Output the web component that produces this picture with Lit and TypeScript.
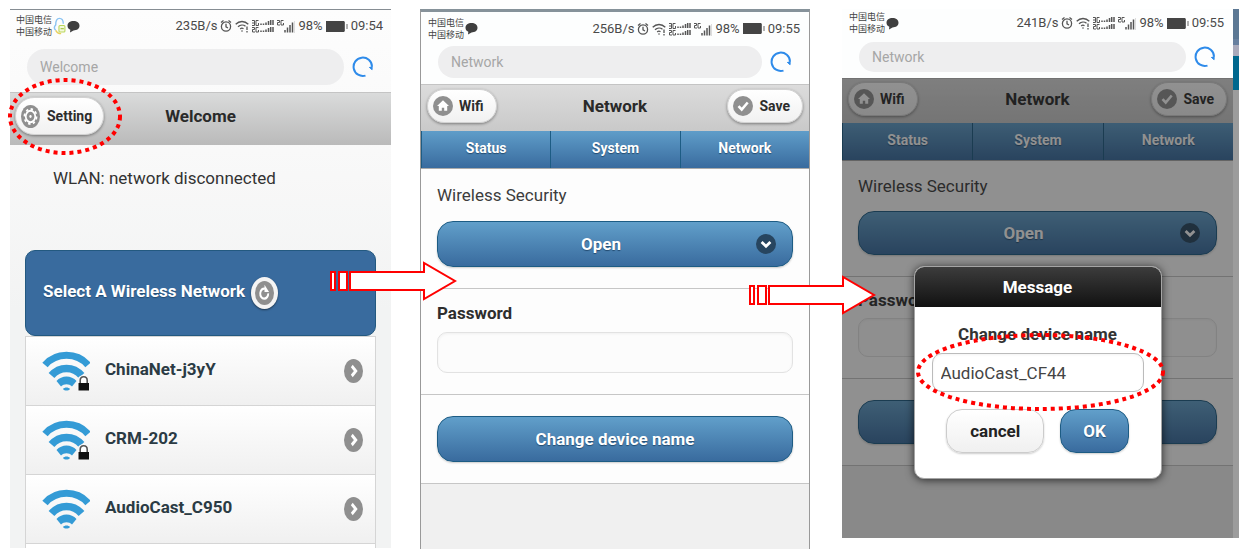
import { LitElement, html, svg, css } from "lit";
import { customElement, property } from "lit/decorators.js";

@customElement("status-bar")
class StatusBar extends LitElement {
  @property() speed = "";
  @property() time = "";
  @property({ type: Boolean }) buddy = false;

  static styles = css`
    :host { display: flex; align-items: center; justify-content: space-between; color: #4a4a4a; font-size: 13px; line-height: 16px; }
    .left, .right { display: flex; align-items: center; gap: 3px; white-space: nowrap; }
    .left { gap: 1px; }
    .carriers { font: 9px/12px "Noto Sans CJK SC", sans-serif; color: #444; }
    svg { display: block; flex: none; }
  `;

  render() {
    return html`
      <div class="left">
        <div class="carriers"><div>中国电信</div><div>中国移动</div></div>
        ${this.buddy ? html`<svg width="13" height="18" viewBox="0 0 12 16" fill="none">
          <path d="M2.500 12C.5 10 1.500 8 2.500 7c0-4 1-6 3.500-6s3.500 2 3.500 5" stroke="#8cc4f2" stroke-width="1.300"/>
          <path d="M2.500 12c1 2 3 3 5 3" stroke="#e9cf5a" stroke-width="1.300"/>
          <rect x="5.500" y="7.500" width="5.500" height="6" rx="1" stroke="#b9d65a" fill="#f3f9dc"/><path d="M7 10.500h3" stroke="#9bbf3a"/>
        </svg>` : ""}
        <svg width="13" height="13" viewBox="0 0 13 13"><path d="M6.500 1C10 1 12.500 3 12.500 5.800S10 10.500 6.500 10.500L3 12.500l.3-2.700C1.500 9 .5 7.600.5 5.800.5 3 3 1 6.500 1z" fill="#3f3f3f"/></svg>
      </div>
      <div class="right">
        <span>${this.speed}</span>
        <svg width="12" height="14" viewBox="0 0 12 14" fill="none" stroke="#555" stroke-width="1.300">
          <circle cx="6" cy="7.500" r="4.600"/><path d="M6 4.800v3l2 1.200M1 3.500 3.500 1.500M11 3.500 8.500 1.500"/>
        </svg>
        <svg width="14" height="14" viewBox="0 0 14 14" fill="none" stroke="#555" stroke-width="1.300">
          <path d="M.7 5.200C4.300 1.600 9.700 1.600 13.300 5.200M3 7.800c2.300-2.200 5.500-2.200 7.500-.5M5.200 10c1-1 2.300-1 3.300-.2"/><circle cx="7" cy="12" r=".8" fill="#555" stroke="none"/><path d="M12 7.500v3.500M12 12v1.500"/>
        </svg>
        <svg width="22" height="14" viewBox="0 0 22 14" fill="none" stroke="#555">
          <path d="M0 1.500h2.500v5H0M0 4h2.500M6.500 1.500H4v5h2.500V4M0 8.500h2.500v2H.5v2.500H3M6.500 8.500H4V13h2.500v-2"/>
          <path d="M9 4.500V6M11.500 4.500V6M14 3.500V6M16.500 2v4M18.700 1v5M21 1v5M9 11.500V13M11.500 11.500V13M14 10.500V13M16.500 9v4M18.700 8v5M21 8v5" stroke-width="1.500"/>
        </svg>
        <svg width="18" height="14" viewBox="0 0 18 14" fill="none" stroke="#555">
          <path d="M0 1.500h2.500v2H.5V6H3M6.500 1.500H4V6h2.500V4"/>
          <path d="M8 11v2.500M10.500 8.500v5M13 6v7.500M15.500 3.500v10" stroke-width="1.500"/><path d="M17.700 2v12" stroke="#bbb" stroke-width=".6"/>
        </svg>
        <span>98%</span>
        <svg width="22" height="11" viewBox="0 0 22 11"><rect width="18" height="11" fill="#444"/><path d="M18.500.5v10M21 3v5" stroke="#666"/></svg>
        <span>${this.time}</span>
      </div>`;
  }
}

@customElement("address-bar")
class AddressBar extends LitElement {
  @property() page = "";

  static styles = css`
    :host { display: flex; align-items: center; gap: 8px; }
    .address { flex: 1; min-width: 0; box-sizing: border-box; height: 100%; border: 0; border-radius: 18px; background: #eeeeef; padding: 0 13px; color: #a6a6a6; font: 14px/20px Roboto, sans-serif; outline: 0; }
    .reload { flex: none; border: 0; background: none; padding: 0; width: 22px; height: 24px; }
    svg { display: block; }
  `;

  render() {
    return html`
      <input class="address" aria-label="Address" .value=${this.page} />
      <button class="reload" aria-label="Reload">
        <svg width="22" height="24" viewBox="0 0 22 24" fill="none" stroke="#2e8bea" stroke-width="2"><path d="M13.500 20.600A9.200 9.200 0 1 1 20 11.500"/><path d="m17.200 12.200 2.900 2.500V11" fill="#2e8bea" stroke-width="1"/></svg>
      </button>`;
  }
}

const glyphs: Record<string, unknown> = {
  gear: svg`<circle cx="10" cy="10" r="5" fill="none" stroke="#fff" stroke-width="1.800"/><circle cx="10" cy="10" r="6.500" fill="none" stroke="#fff" stroke-width="1.600" stroke-dasharray="2.500 2.600"/><circle cx="10" cy="10" r="1.200" fill="#fff"/>`,
  home: svg`<path d="m10 4.200 6 5.800h-1.800v4.800h-3v-3H8.800v3h-3V10H4z" fill="#fff"/>`,
  check: svg`<path d="m5.500 10.200 3.200 3.300 6-7" fill="none" stroke="#fff" stroke-width="2.600"/>`,
  refresh: svg`<path d="M13.900 10.300A4.200 4.200 0 1 1 10.500 6.400" fill="none" stroke="#fff" stroke-width="2"/><path d="M10 3.200v5.900h4.800z" fill="#fff"/>`,
  right: svg`<path d="m8.200 5.800 4.200 4.200-4.200 4.200" fill="none" stroke="#fff" stroke-width="2.800"/>`,
  down: svg`<path d="m5.600 8 4.400 4.200L14.400 8" fill="none" stroke="#fff" stroke-width="2.800"/>`,
};
const disc = (name: string, fill = "#8f8f8f", size = 20, tall = size) => html`
  <svg class="disc" width=${size} height=${tall} viewBox="0 0 20 20" preserveAspectRatio="none"><circle cx="10" cy="10" r="10" fill=${fill} />${glyphs[name]}</svg>`;

const shared = css`
  :host { display: flex; flex-direction: column; position: relative; font-family: Roboto, sans-serif; color: #333; background: #fdfefe; }
  svg { display: block; flex: none; }
  .header { display: grid; grid-template-columns: 1fr auto 1fr; align-items: center; box-sizing: border-box; padding: 0 6px 4px; background: linear-gradient(#dcdcdc, #c9c9c9); border-top: 1px solid #c4c4c4; }
  .title { margin: 0; grid-column: 2; font-weight: 700; color: #2a2a2a; font-size: 17px; line-height: 24px; }
  .pill { justify-self: start; display: flex; align-items: center; gap: 6px; box-sizing: border-box; height: 34px; padding: 0 12px 0 5px; border: 1px solid #d2d2d2; border-radius: 17px; background: linear-gradient(#fff, #f1f1f1); box-shadow: 0 1px 3px rgba(0, 0, 0, 0.4); font: 700 14px/20px Roboto, sans-serif; color: #2d2d2d; }
  .end { justify-self: end; grid-column: 3; }
`;

@customElement("welcome-screen")
class WelcomeScreen extends LitElement {
  static styles = [shared, css`
    :host { background: linear-gradient(#fdfdfd 0, #f9f9f9 140px, #f2f3f3 300px); }
    .status { height: 32px; padding: 0 8px 0 6px; }
    .url { height: 36px; padding: 7px 17px 7px 17px; }
    .header { height: 53px; padding: 0 5px 6px; background: linear-gradient(#dadbdb, #bababa); }
    .pill { height: 38px; border-radius: 19px; padding: 0 11px 0 5px; gap: 7px; }
    .wlan { margin: 0; padding: 21px 43px 60px; font-size: 17px; line-height: 24px; }
    .panel { margin: 0 15px; }
    .select { display: flex; align-items: center; gap: 6px; box-sizing: border-box; height: 86px; padding: 0 17px; border: 1px solid #235980; border-radius: 10px; background: #396b9e; }
    .heading { margin: 0; padding-bottom: 4px; color: #fff; font-size: 17px; line-height: 24px; font-weight: 700; text-shadow: 0 1px 1px #234b70; }
    .round { border: 0; padding: 4px; border-radius: 50%; background: #f4f4f4; box-shadow: 0 1px 2px rgba(0, 0, 0, 0.5); }
    .list { list-style: none; margin: 0; padding: 0; border: 1px solid #d5d5d5; border-top: 0; border-bottom: 0; }
    .row { display: flex; align-items: center; box-sizing: border-box; height: 69px; padding: 0 12px 0 16px; border-top: 1px solid #d5d5d5; background: linear-gradient(#fff, #f0f0f0); color: #2b3b44; font-weight: 700; font-size: 17px; line-height: 24px; text-decoration: none; }
    .name { flex: 1; padding: 0 0 4px 15px; }
    .more { height: 4px; border-top: 1px solid #d5d5d5; background: #fff; }
  `];

  row(name: string, locked: boolean) {
    return html`<li><a class="row" href="#">
      <svg width="48" height="40" viewBox="0 0 48 40">
        <g fill="none" stroke="#349bd6"><path d="M3 14C14 1 35 1 46 14" stroke-width="7"/><path d="M9.500 24.500c8-9.500 22-9.500 30 0" stroke-width="7.500"/></g>
        <path d="M14.500 30c5-6 15-6 20 0L30 35.500c-3-3-8-3-11 0zM21 38c1.500-2 5.500-2 7 0-1.500 2-5.500 2-7 0z" fill="#349bd6"/>
        ${locked ? svg`<path d="M35.500 39.500V29c0-6.500 12-6.500 12 0v10.500z" fill="#f8f8f8"/><path d="M38.200 33v-3.500c0-5 7-5 7 0V33" fill="#fff" stroke="#555" stroke-width="1.600"/><rect x="36.500" y="32" width="10.500" height="7.500" fill="#111"/>` : ""}
      </svg>
      <span class="name">${name}</span>${disc("right", "#8f8f8f", 19, 24)}
    </a></li>`;
  }

  render() {
    return html`
      <status-bar class="status" speed="235B/s" time="09:54" buddy></status-bar>
      <address-bar class="url" page="Welcome"></address-bar>
      <header class="header">
        <button class="pill">${disc("gear", "#8f8f8f", 19, 23)}Setting</button>
        <h1 class="title">Welcome</h1>
      </header>
      <p class="wlan">WLAN: network disconnected</p>
      <section class="panel">
        <div class="select"><h2 class="heading">Select A Wireless Network</h2>
          <button class="round" aria-label="Refresh">${disc("refresh", "#8f8f8f", 19, 24)}</button></div>
        <ul class="list">
          ${this.row("ChinaNet-j3yY", true)}${this.row("CRM-202", true)}${this.row("AudioCast_C950", false)}
          <li class="more"></li>
        </ul>
      </section>`;
  }
}

@customElement("network-screen")
class NetworkScreen extends LitElement {
  @property() speed = "";
  @property({ type: Boolean, reflect: true }) dialog = false;

  static styles = [shared, css`
    :host { --bar: 33px; --url: 32px; --head: 47px; --tab: 37px; --btn: 46px; --field: 41px; --gap: 21px; --line: 24px; --foot: 65px; }
    :host([dialog]) { --bar: 28px; --url: 30px; --head: 45px; --tab: 37px; --btn: 44px; --field: 39px; --gap: 21px; --line: 22px; --foot: 72px; }
    .status { height: var(--bar); padding: 0 9px 0 7px; }
    .url { height: var(--url); padding: 1px 17px 6px 17px; }
    :host([dialog]) .url { padding-top: 5px; }
    .body { position: relative; background: #fdfdfd; }
    .header { height: var(--head); }
    .tabs { display: grid; grid-template-columns: repeat(3, 1fr); border-bottom: 1px solid #aaa; }
    .tab { display: flex; align-items: center; justify-content: center; box-sizing: border-box; height: var(--tab); border-left: 1px solid #1d5c84; background: linear-gradient(#5f9dc9, #396b9e); color: #fff; font-size: 14px; line-height: 20px; font-weight: 700; text-decoration: none; text-shadow: 0 1px 1px #234b70; padding-bottom: 3px; }
    .group { padding: var(--gap) 16px; border-bottom: 1px solid #c6c6c6; }
    .security { padding-top: 14px; }
    .secret { padding-top: 12px; }
    .label { display: block; font-size: 17px; line-height: var(--line); color: #3c3c3c; margin-bottom: 14px; }
    .secret .label { font-weight: 700; margin-bottom: 7px; color: #2e2e2e; }
    .big { display: block; width: 100%; box-sizing: border-box; height: var(--btn); border: 1px solid #1d5c84; border-radius: 16px; background: linear-gradient(#619fca, #396b9e); color: #fff; font: 700 17px/24px Roboto, sans-serif; text-shadow: 0 1px 1px #234b70; box-shadow: 0 1px 2px rgba(0, 0, 0, 0.2); }
    .choice { display: grid; align-items: center; }
    .choice > * { grid-area: 1 / 1; }
    .open { appearance: none; text-align-last: center; padding: 0 28px 0 0; }
    .choice .disc { justify-self: end; margin-right: 17px; pointer-events: none; }
    .text { display: block; width: 100%; box-sizing: border-box; height: var(--field); border: 1px solid #e2e2e2; border-radius: 10px; background: #fcfcfc; box-shadow: inset 0 1px 3px rgba(0, 0, 0, 0.05); font: 17px/24px Roboto, sans-serif; color: #444; padding: 0 8px; outline: 0; }
    .foot { height: var(--foot); background: #f0f0f0; }
    .shade { position: absolute; inset: 0; background: rgba(26, 26, 26, 0.48); }
    .message { position: absolute; z-index: 1; top: 257px; left: 50%; transform: translateX(-50%); box-sizing: border-box; width: 248px; height: 213px; margin: 0; padding: 0; border: 1px solid #a5a5a5; border-radius: 10px; background: #fff; color: #333; overflow: hidden; box-shadow: 0 1px 8px rgba(0, 0, 0, 0.7); text-align: center; }
    .caption { margin: 0; color: #fff; background: linear-gradient(#3c3c3c, #111); font-size: 17px; line-height: 40px; }
    .prompt { display: block; font-weight: 700; font-size: 17px; line-height: 24px; padding: 15px 0 7px; color: #333; }
    .rename { width: auto; padding: 0 17px; }
    .message .text { border-color: #bbb; background: #fff; }
    .actions { display: flex; justify-content: center; gap: 16px; padding-top: 17px; }
    .actions .big { width: auto; padding: 0 22px; }
    .actions .plain { padding: 0 23px; color: #222; background: linear-gradient(#fff, #f0f0f0); border-color: #ccc; text-shadow: none; }
  `];

  render() {
    return html`
      <status-bar class="status" speed=${this.speed} time="09:55"></status-bar>
      <address-bar class="url" page="Network"></address-bar>
      <div class="body">
        <header class="header">
          <button class="pill">${disc("home")}Wifi</button>
          <h1 class="title">Network</h1>
          <button class="pill end">${disc("check")}Save</button>
        </header>
        <nav class="tabs"><a class="tab" href="#">Status</a><a class="tab" href="#">System</a><a class="tab" href="#">Network</a></nav>
        <div class="group security">
          <label class="label" for="mode">Wireless Security</label>
          <div class="choice"><select class="big open" id="mode"><option>Open</option></select>${disc("down", "#27455f")}</div>
        </div>
        <div class="group secret">
          <label class="label" for="password">Password</label>
          <input class="text" id="password" type="password" />
        </div>
        <div class="group"><button class="big" aria-label="Change device name">${this.dialog ? "" : "Change device name"}</button></div>
        <div class="foot"></div>
        ${this.dialog ? html`<div class="shade"></div>` : ""}
      </div>
      ${this.dialog ? html`
        <section class="message" role="dialog" aria-labelledby="caption">
          <h2 class="caption" id="caption">Message</h2>
          <label class="prompt" for="device">Change device name</label>
          <div class="rename"><input class="text" id="device" .value=${"AudioCast_CF44"} /></div>
          <div class="actions"><button class="big plain">cancel</button><button class="big">OK</button></div>
        </section>` : ""}`;
  }
}

@customElement("app-root")
class AppRoot extends LitElement {
  static styles = css`
    :host { display: block; background: #fff; }
    .steps { display: grid; grid-template-columns: 381fr 29px 390fr 32px 397fr; align-items: start; padding: 9px 10px 5px; }
    .step { position: relative; grid-row: 1; min-width: 0; }
    .first { grid-column: 1; z-index: 2; border-top: 1px solid #868d93; }
    .second { grid-column: 3; z-index: 1; border: 1px solid #999; border-top: 3px solid #86929a; border-bottom: 0; }
    .third { grid-column: 5; display: grid; grid-template-columns: 1fr 6px; }
    .edge { background: linear-gradient(#5c7894 0 30px, #68809f 30px 36px, #aab 36px 47px, #00688e 47px 81px, #9c9c9c 81px); }
    .note { position: absolute; pointer-events: none; display: block; z-index: 3; overflow: visible; }
    .ring-a { left: -2px; top: 68px; }
    .ring-b { right: 74px; top: 324px; }
    .arrow-a { right: -66px; top: 251px; }
    .arrow-b { right: -67px; top: 263px; }
  `;

  ring(cls: string, w: number, h: number) {
    return html`<svg class="note ${cls}" width=${w} height=${h} aria-hidden="true"><ellipse cx=${w / 2} cy=${h / 2} rx=${w / 2 - 2} ry=${h / 2 - 2} fill="none" stroke="#f00" stroke-width="4" stroke-dasharray="4 4" /></svg>`;
  }

  arrow(cls: string) {
    return html`<svg class="note ${cls}" width="128" height="40" viewBox="0 0 128 40" fill="#fff" stroke="#f00" stroke-width="2" aria-hidden="true"><path d="M2 11h4v18H2zM10 11h8v18h-8zM21 11h74V2l31 18-31 18v-9H21z" /></svg>`;
  }

  render() {
    return html`<main class="steps">
      <div class="step first"><welcome-screen></welcome-screen>${this.ring("ring-a", 114, 77)}${this.arrow("arrow-a")}</div>
      <div class="step second"><network-screen speed="256B/s"></network-screen>${this.arrow("arrow-b")}</div>
      <div class="step third"><network-screen speed="241B/s" dialog></network-screen><div class="edge"></div>${this.ring("ring-b", 249, 78)}</div>
    </main>`;
  }
}
